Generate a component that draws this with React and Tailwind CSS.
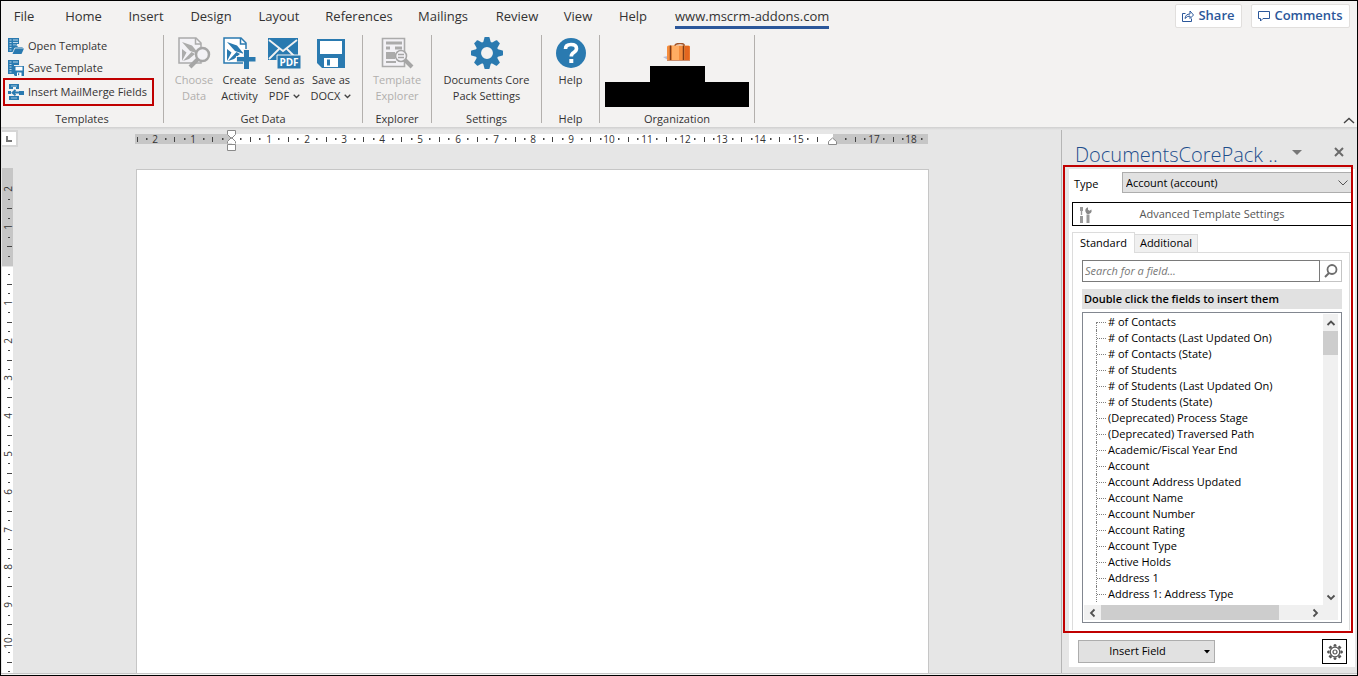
import React from "react";

const BLUE = "#2a7ab0";

function OpenTemplateIcon() {
  return (
    <svg className="shrink-0" width="16" height="16" viewBox="0 0 16 16" aria-hidden="true">
      <path d="M0 0h11v6H9l-1 2H6v6H0z" fill={BLUE} />
      <path d="M1.500 2h2M5 2h5M1.500 4.500h2M5 4.500h5M1.500 7h2M5 7h3M1.500 9.500h2M1.500 12h2" stroke="#cfe3f0" strokeWidth=".9" />
      <path d="M5 7.500h4l1 1.500h4.500V12H7l-2 3z" fill={BLUE} />
      <path d="M7 10.500h9L13.500 16H4.500z" fill={BLUE} />
      <path d="M5 14l1.800-4H14.500" stroke="#f3f2f1" strokeWidth=".8" fill="none" />
    </svg>
  );
}

function SaveTemplateIcon() {
  return (
    <svg className="shrink-0" width="16" height="16" viewBox="0 0 16 16" aria-hidden="true">
      <path d="M0 0h11v5H6v9H0z" fill={BLUE} />
      <path d="M1.500 2h2M5 2h5M1.500 4.500h2M1.500 7h2M1.500 9.500h2M1.500 12h2" stroke="#cfe3f0" strokeWidth=".9" />
      <path d="M6 6h10v10H7l-1-1z" fill={BLUE} />
      <path d="M7.500 6.800h7V10.500h-7zM9 12.500h4.500V16H9z" fill="#fff" />
      <path d="M10 13.300h1.200v2H10z" fill={BLUE} />
    </svg>
  );
}

function MergeFieldsIcon() {
  return (
    <svg className="shrink-0" width="16" height="16" viewBox="0 0 16 16" aria-hidden="true">
      <path d="M1 0h10v5H8V3H5v2H1zM1 12h10v4H1z" fill={BLUE} />
      <path d="M0 7h3v3H0zM11 7h5v4h-5z" fill={BLUE} />
      <path d="M12 8.500H5M7.500 6L4.500 8.700l3 2.500" stroke={BLUE} strokeWidth="1.800" fill="none" />
      <path d="M3 2h6M3 14h6" stroke="#9cc4de" />
    </svg>
  );
}

function PageBase({ color, fill }) {
  return (
    <>
      <path d="M1 1h17l5 5v20H1z" fill={fill} stroke={color} strokeWidth="1.500" />
      <path d="M17.500 1v6H23" fill="none" stroke={color} strokeWidth="1.500" />
      <path d="M4 5l10 3.500 7 8.500-9-3z" fill={color} />
      <path d="M4 12l4.500 3.500L4 24zM5 24l8.500-9 3.500 2-6 5z" fill={color} />
    </>
  );
}

function ChooseDataIcon() {
  return (
    <svg width="33" height="33" viewBox="0 0 33 33" aria-hidden="true">
      <PageBase color="#ababab" fill="#f3f2f6" />
      <path d="M20 22l-8 8" stroke="#a6a6a6" strokeWidth="4" />
      <circle cx="24.500" cy="17.500" r="6.500" fill="#f3f2f6" stroke="#a6a6a6" strokeWidth="2.500" />
    </svg>
  );
}

function CreateActivityIcon() {
  return (
    <svg width="33" height="33" viewBox="0 0 33 33" aria-hidden="true">
      <PageBase color={BLUE} fill="#fff" />
      <path d="M20 12h7v7h6v6h-6v7h-7v-7h-7v-6h7z" fill="#f3f2f1" />
      <path d="M21 13h5v7h6.500v4.500H26V32h-5v-7.500h-7V20h7z" fill={BLUE} />
    </svg>
  );
}

function SendPdfIcon() {
  return (
    <svg width="33" height="33" viewBox="0 0 33 33" aria-hidden="true">
      <path d="M0 1h30v22H0z" fill={BLUE} />
      <path d="M1 3l14 11L29 3M1 22l10-10M29 22L19 12" fill="none" stroke="#f3f2f1" strokeWidth="1.800" />
      <path d="M9 18h24v14H9z" fill={BLUE} stroke="#f3f2f1" />
      <text x="21" y="29" textAnchor="middle" fill="#fff" fontSize="10" fontWeight="700" fontFamily="Open Sans, sans-serif">PDF</text>
    </svg>
  );
}

function SaveIcon() {
  return (
    <svg width="28" height="29" viewBox="0 0 28 29" aria-hidden="true">
      <path d="M0 0h28v29H5l-5-5z" fill={BLUE} />
      <path d="M3 2h22v13H3zM7 19h14v9H7z" fill="#fff" />
      <path d="M10 20.500h3v6h-3z" fill={BLUE} />
    </svg>
  );
}

function ExplorerIcon() {
  return (
    <svg width="33" height="33" viewBox="0 0 33 33" aria-hidden="true">
      <path d="M1.500 1.500h22v28h-22z" fill="#f3f2f6" stroke="#ababab" strokeWidth="1.600" />
      <path d="M5 4.500h16v3H5zM5 9.500h4v3H5zM14 9.500h7v3h-7zM5 15h9v7H5zM5 24h10v2H5z" fill="#ababab" />
      <path d="M23 22l8 8" stroke="#a6a6a6" strokeWidth="4" />
      <circle cx="20" cy="19" r="5.500" fill="#f3f2f6" stroke="#a6a6a6" strokeWidth="1.600" />
      <path d="M17 17.500h6M17 20.500h6" stroke="#a6a6a6" strokeWidth="1.500" />
    </svg>
  );
}

function SettingsIcon() {
  return (
    <svg width="32" height="32" viewBox="-16 -16 32 32" aria-hidden="true">
      <g fill={BLUE}>
        {[0, 45, 90, 135, 180, 225, 270, 315].map((a) => (
          <path key={a} d="M-4-10l1.500-5.500q.2-.5.700-.5h3.600q.5 0 .700.500L4-10z" transform={`rotate(${a})`} />
        ))}
      </g>
      <circle r="8.700" fill="none" stroke={BLUE} strokeWidth="5.500" />
    </svg>
  );
}

function HelpIcon() {
  return (
    <svg width="30" height="30" viewBox="0 0 30 30" aria-hidden="true">
      <circle cx="15" cy="15" r="15" fill={BLUE} />
      <path d="M9.500 11q0-4.500 5.500-4.500t5.500 4q0 2.300-2.700 4-2.500 1.500-2.500 4" fill="none" stroke="#fff" strokeWidth="3.600" />
      <path d="M13.300 21h4v4h-4z" fill="#fff" />
    </svg>
  );
}

function SuitcaseIcon() {
  return (
    <svg width="28" height="19" viewBox="0 0 28 19" aria-hidden="true">
      <path d="M0 14l5-1v4z" fill="#b9bdd6" />
      <path d="M12 3q0-2.500 5-2.500T21 3" fill="none" stroke="#a2562b" strokeWidth="1.500" />
      <rect x="4" y="2.500" width="23" height="15" rx="1.500" fill="#f58d3d" />
      <rect x="9" y="3" width="7" height="14" fill="#ffad63" />
      <rect x="22" y="3" width="4.500" height="14" fill="#e4661f" />
      <path d="M7.500 2.500v15M20.500 2.500v15" stroke="#7d3a17" strokeWidth="1.500" />
      <path d="M4 17.500h23" stroke="#c98d6d" />
    </svg>
  );
}

function Caret() {
  return (
    <svg className="inline-block" width="7" height="5" viewBox="0 0 7 5" aria-hidden="true">
      <path d="M.7.700L3.500 3.500 6.300.700" fill="none" stroke="#444" strokeWidth="1.300" />
    </svg>
  );
}

function Chevron({ dir }) {
  const d = {
    up: "M1.500 7L5 3.500 8.500 7",
    down: "M1.500 3.500L5 7l3.500-3.500",
    left: "M6.500 1.500L3 5l3.500 3.500",
    right: "M3.500 1.500L7 5 3.500 8.500",
  }[dir];
  return (
    <svg width="10" height="10" viewBox="0 0 10 10" aria-hidden="true">
      <path d={d} fill="none" stroke="#505050" strokeWidth="1.800" />
    </svg>
  );
}

const tabs = [
  ["File", "w-[46px]"],
  ["Home", "w-[73px]"],
  ["Insert", "w-[52px]"],
  ["Design", "w-[78px]"],
  ["Layout", "w-[58px]"],
  ["References", "w-[102px]"],
  ["Mailings", "w-[66px]"],
  ["Review", "w-[82px]"],
  ["View", "w-[40px]"],
  ["Help", "w-[70px]"],
];

function Group({ label, width, children }) {
  return (
    <section className={`flex shrink-0 flex-col border-r border-[#b3b0ad] ${width}`} aria-label={label}>
      <div className="flex flex-1 items-start justify-center">{children}</div>
      <h2 className="text-center text-[11px] leading-2">{label}</h2>
    </section>
  );
}

function BigButton({ icon, lines, caret, disabled, width }) {
  return (
    <button
      type="button"
      disabled={disabled}
      className={`flex shrink-0 flex-col items-center pt-px text-[11px] leading-4 whitespace-nowrap disabled:text-[#b1afad] ${width}`}
    >
      <span className="mb-[2px] flex h-[34px] items-center justify-center">{icon}</span>
      {lines.map((l, i) => (
        <span key={l} className="flex items-center gap-1">
          {l}
          {caret && i === lines.length - 1 && <Caret />}
        </span>
      ))}
    </button>
  );
}

function Ribbon() {
  const small = "flex items-center gap-1 whitespace-nowrap px-[5px] text-left text-[11px] leading-4";
  return (
    <header className="shrink-0 bg-[#f3f2f1] text-[#333]">
      <div className="flex h-[33px] items-start">
        <nav className="flex flex-1 items-start pt-[5px] text-[13px] leading-5">
          {tabs.map(([t, w]) => (
            <a key={t} href={`#${t}`} className={`shrink-0 text-center ${w}`}>
              {t}
            </a>
          ))}
          <a href="#addons" aria-current="page" className="ml-[7px] border-b-[3px] border-[#2b579a] font-medium">
            www.mscrm-addons.com
          </a>
        </nav>
        <div className="flex gap-[9px] pt-[3px] pr-[7px] text-[13px] font-semibold text-[#2b579a]">
          <button type="button" className="flex h-6 w-[67px] items-center justify-center gap-1 rounded-xs border border-[#e1dfdd] bg-white">
            <svg width="12" height="12" viewBox="0 0 12 12" fill="none" stroke="#2b579a" aria-hidden="true">
              <path d="M3.500 3.500h-3v8h9v-3M3 8.500Q3.500 4 8 4V1l3.500 4L8 8.500V6Q5 6 3 8.500z" />
            </svg>
            Share
          </button>
          <button type="button" className="flex h-6 w-[99px] items-center justify-center gap-1 rounded-xs border border-[#e1dfdd] bg-white">
            <svg width="12" height="12" viewBox="0 0 12 12" fill="none" stroke="#2b579a" aria-hidden="true">
              <path d="M.5 1.500h11v7H5l-2.500 2.500V8.500h-2z" />
            </svg>
            Comments
          </button>
        </div>
      </div>
      <div className="flex h-[93px] items-start justify-between">
        <div className="flex h-[89px] pt-px">
          <Group label="Templates" width="w-[163px]">
            <div className="flex w-full flex-col px-[2px]">
              <button type="button" className={`h-[22px] ${small}`}>
                <OpenTemplateIcon />
                Open Template
              </button>
              <button type="button" className={`h-[22px] ${small}`}>
                <SaveTemplateIcon />
                Save Template
              </button>
              <button type="button" className="-mt-px flex h-7 w-[151px] items-center gap-1 border-2 border-[#c00000] px-[3px] text-left text-[11px] leading-4 whitespace-nowrap">
                <MergeFieldsIcon />
                Insert MailMerge Fields
              </button>
            </div>
          </Group>
          <Group label="Get Data" width="w-[199px]">
            <BigButton icon={<ChooseDataIcon />} lines={["Choose", "Data"]} disabled width="w-[46px]" />
            <BigButton icon={<CreateActivityIcon />} lines={["Create", "Activity"]} width="w-[45px]" />
            <BigButton icon={<SendPdfIcon />} lines={["Send as", "PDF"]} caret width="w-[45px]" />
            <BigButton icon={<SaveIcon />} lines={["Save as", "DOCX"]} caret width="w-[48px]" />
          </Group>
          <Group label="Explorer" width="w-[69px]">
            <BigButton icon={<ExplorerIcon />} lines={["Template", "Explorer"]} disabled width="w-[60px]" />
          </Group>
          <Group label="Settings" width="w-[110px]">
            <BigButton icon={<SettingsIcon />} lines={["Documents Core", "Pack Settings"]} width="w-[100px]" />
          </Group>
          <Group label="Help" width="w-[58px]">
            <BigButton icon={<HelpIcon />} lines={["Help"]} width="w-[50px]" />
          </Group>
          <Group label="Organization" width="w-[155px]">
            <div className="flex flex-col items-center pt-2">
              <SuitcaseIcon />
              <div className="mt-1 h-4 w-[55px] bg-black" />
              <div className="h-[25px] w-36 bg-black" />
            </div>
          </Group>
        </div>
        <button type="button" aria-label="Collapse the ribbon" className="mr-[2px] self-end pb-[3px]">
          <svg width="12" height="7" viewBox="0 0 12 7" aria-hidden="true">
            <path d="M1 6l5-4.500L11 6" fill="none" stroke="#444" strokeWidth="1.400" />
          </svg>
        </button>
      </div>
    </header>
  );
}

const CM = 37.8;

function HorizontalRuler() {
  const origin = 96;
  const marks = [];
  for (let q = -10; q <= 73; q++) {
    const x = Math.round(origin + (q * CM) / 4);
    if (q === 0 || q === 64 || q === 63) continue;
    if (q % 4 === 0)
      marks.push(
        <text key={q} x={x} y="13" textAnchor="middle" fontSize="10" fill="#333">
          {Math.abs(q / 4)}
        </text>
      );
    else if (q % 2 === 0) marks.push(<path key={q} d={`M${x + 0.5} 7v5`} stroke="#444" />);
    else marks.push(<path key={q} d={`M${x} 9h1.500`} stroke="#444" strokeWidth="2" />);
  }
  return (
    <svg className="block font-['Open_Sans',sans-serif]" width="793" height="24" viewBox="0 0 793 24" aria-hidden="true">
      <path d="M0 4h793v10H0z" fill="#c6c6c6" />
      <path d="M97 4h601v10H97z" fill="#fff" />
      {marks}
      <g fill="#fff" stroke="#8a8a8a">
        <path d="M92.500.500h8v4l-4 4-4-4zM92.500 13.500v-2l4-4 4 4v2M92.500 14.500h8v6h-8z" />
        <path d="M693.500 14.500v-3l4-3.500 4 3.500v3z" />
      </g>
    </svg>
  );
}

function VerticalRuler() {
  const origin = 97;
  const marks = [];
  for (let q = -9; q <= 43; q++) {
    const y = Math.round(origin + (q * CM) / 4);
    if (q === 0 || y < 16) continue;
    if (q % 4 === 0)
      marks.push(
        <text key={q} transform={`translate(10 ${y}) rotate(-90)`} textAnchor="middle" fontSize="10" fill="#333">
          {Math.abs(q / 4)}
        </text>
      );
    else if (q % 2 === 0) marks.push(<path key={q} d={`M5 ${y + 0.5}h5`} stroke="#444" />);
    else marks.push(<path key={q} d={`M6 ${y + 0.5}h2`} stroke="#444" />);
  }
  return (
    <svg className="block font-['Open_Sans',sans-serif]" width="12" height="506" viewBox="0 0 12 506" aria-hidden="true">
      <path d="M0 0h11v98H0z" fill="#c6c6c6" />
      <path d="M0 99h11v407H0z" fill="#fff" />
      {marks}
    </svg>
  );
}

const fields = [
  "# of Contacts",
  "# of Contacts (Last Updated On)",
  "# of Contacts (State)",
  "# of Students",
  "# of Students (Last Updated On)",
  "# of Students (State)",
  "(Deprecated) Process Stage",
  "(Deprecated) Traversed Path",
  "Academic/Fiscal Year End",
  "Account",
  "Account Address Updated",
  "Account Name",
  "Account Number",
  "Account Rating",
  "Account Type",
  "Active Holds",
  "Address 1",
  "Address 1: Address Type",
];

function FieldList() {
  return (
    <div className="flex flex-1 flex-col overflow-hidden border border-[#828790] bg-white p-px">
      <div className="flex min-h-0 flex-1">
        <ul role="tree" aria-label="Fields" className="flex-1 overflow-hidden pl-3">
          {fields.map((f, i) => (
            <li key={f} role="treeitem" className="flex h-4 text-[11px] leading-4 whitespace-nowrap">
              <span className={`w-0 shrink-0 border-l border-dotted border-[#808080] ${i === 0 ? "mt-2" : ""}`} />
              <span className="mt-2 h-0 w-[9px] shrink-0 border-t border-dotted border-[#808080]" />
              <span className="pl-[2px]">{f}</span>
            </li>
          ))}
        </ul>
        <div className="mr-[2px] flex w-[15px] flex-col items-center bg-[#f0f0f0]">
          <button type="button" aria-label="Scroll up" className="flex h-[17px] items-center">
            <Chevron dir="up" />
          </button>
          <div className="h-6 w-full bg-[#cdcdcd]" />
          <button type="button" aria-label="Scroll down" className="mt-auto flex h-[17px] items-center">
            <Chevron dir="down" />
          </button>
        </div>
      </div>
      <div className="mr-[2px] mb-px flex h-[15px] shrink-0 items-center bg-[#f0f0f0] pr-[15px]">
        <button type="button" aria-label="Scroll left" className="flex w-[17px] justify-center">
          <Chevron dir="left" />
        </button>
        <div className="h-full w-[178px] bg-[#cdcdcd]" />
        <button type="button" aria-label="Scroll right" className="ml-auto flex w-[17px] justify-center">
          <Chevron dir="right" />
        </button>
      </div>
    </div>
  );
}

function SmallGear() {
  return (
    <svg width="16" height="16" viewBox="-8 -8 16 16" fill="none" stroke="#555" aria-hidden="true">
      {[0, 45, 90, 135, 180, 225, 270, 315].map((a) => (
        <path key={a} d="M-1-5.500v-1.700h2v1.700" transform={`rotate(${a})`} fill="#555" />
      ))}
      <circle r="4.800" strokeWidth="1.300" />
      <circle r="2" strokeWidth="1.200" />
    </svg>
  );
}

function TaskPane() {
  return (
    <aside className="flex w-[296px] shrink-0 flex-col border-l border-[#b5b5b5] pr-[2px] pl-[7px] text-[11px] text-black">
      <div className="flex h-[38px] shrink-0 items-end pb-1 pl-[6px]">
        <h1 className="w-[212px] text-[20px] leading-[18px] font-light whitespace-nowrap text-[#1e4e8c]">DocumentsCorePack ..</h1>
        <button type="button" aria-label="Task pane options" className="flex h-6 w-5 items-center justify-center">
          <svg width="10" height="5" viewBox="0 0 10 5" aria-hidden="true">
            <path d="M0 0h10L5 5z" fill="#777" />
          </svg>
        </button>
        <button type="button" aria-label="Close" className="ml-auto flex h-6 w-8 items-center justify-center">
          <svg width="10" height="10" viewBox="0 0 10 10" aria-hidden="true">
            <path d="M1 1l8 8M9 1L1 9" stroke="#6a6a6a" strokeWidth="2" />
          </svg>
        </button>
      </div>
      <div className="mt-px flex min-h-0 flex-1 flex-col bg-white">
        <div className="relative flex min-h-0 flex-1 flex-col px-[3px] pt-[3px]">
          <div className="pointer-events-none absolute -top-1 right-[2px] bottom-0 -left-[6px] z-10 border-2 border-[#c00000]" />
          <div className="flex h-[21px] items-center">
            <label htmlFor="type" className="w-[50px] pt-1 pl-[2px]">
              Type
            </label>
            <div className="relative h-full flex-1">
              <select id="type" className="block h-full w-full appearance-none border border-[#adadad] bg-[#e1e1e1] px-[3px] leading-4">
                <option>Account (account)</option>
              </select>
              <svg className="pointer-events-none absolute top-2 right-1" width="10" height="6" viewBox="0 0 10 6" aria-hidden="true">
                <path d="M.5.500L5 5 9.500.500" fill="none" stroke="#555" />
              </svg>
            </div>
          </div>
          <button type="button" className="mt-[9px] flex h-6 shrink-0 items-center border border-black bg-white pl-[6px] text-[#555]">
            <svg width="14" height="17" viewBox="0 0 14 17" aria-hidden="true">
              <path d="M1 1h3v4H3.200v4H1.800V5H1zM1 10h3v7H1zM7.500 8.500h3V17h-3z" fill="#999" />
              <path d="M9 1.300v2.500l1.500 1L12.300 3.500Q13.500 6.500 10.500 7.800T6.500 5.800 9 1.300z" fill="#888" />
            </svg>
            <span className="flex-1 pr-5 text-center">Advanced Template Settings</span>
          </button>
          <div role="tablist" className="mt-[6px] flex shrink-0 items-end">
            <button type="button" role="tab" aria-selected="true" className="relative -mb-px h-[21px] w-[63px] border border-b-0 border-[#dcdcdc] bg-white">
              Standard
            </button>
            <button type="button" role="tab" aria-selected="false" className="h-[18px] w-[63px] border border-b-0 border-l-0 border-[#dcdcdc] bg-[#f0f0f0]">
              Additional
            </button>
          </div>
          <div role="tabpanel" className="mr-[2px] mb-[3px] flex min-h-0 flex-1 flex-col border border-b-0 border-[#dcdcdc] pt-[7px] pr-[7px] pb-[7px] pl-[9px]">
            <div className="flex h-[22px] shrink-0">
              <input
                type="text"
                aria-label="Search for a field"
                placeholder="Search for a field..."
                className="min-w-0 flex-1 border border-[#7a7a7a] px-[2px] italic placeholder:text-[#777]"
              />
              <button type="button" aria-label="Search" className="flex w-[22px] items-center justify-center border border-l-0 border-[#c4c4c4]">
                <svg width="14" height="14" viewBox="0 0 14 14" fill="none" stroke="#6d6d6d" aria-hidden="true">
                  <circle cx="8" cy="5.500" r="4.500" strokeWidth="1.800" />
                  <path d="M5 9l-4 4" strokeWidth="2" />
                </svg>
              </button>
            </div>
            <p className="mt-[7px] mb-[3px] h-5 shrink-0 bg-[#e1e1e1] pl-[2px] leading-5 font-semibold">Double click the fields to insert them</p>
            <FieldList />
          </div>
        </div>
        <div className="flex h-[34px] shrink-0 items-center justify-between pt-[3px] pr-2 pl-[9px]">
          <button type="button" className="flex h-[23px] w-[137px] items-center border border-[#adadad] bg-[#e1e1e1] pr-1">
            <span className="flex-1 pr-2 text-center">Insert Field</span>
            <svg width="6" height="4" viewBox="0 0 6 4" aria-hidden="true">
              <path d="M0 0h6L3 3.500z" />
            </svg>
          </button>
          <button type="button" aria-label="Settings" className="flex h-[25px] w-[25px] items-center justify-center border border-black bg-white">
            <SmallGear />
          </button>
        </div>
      </div>
      <div className="h-[6px] shrink-0" />
    </aside>
  );
}

export default function App() {
  return (
    <div className="flex h-screen flex-col overflow-hidden border border-black bg-[#e6e6e6] font-['Open_Sans','Noto_Sans',sans-serif]">
      <Ribbon />
      <div className="h-[3px] shrink-0 bg-linear-to-b from-[#cfcfcf] to-[#e6e6e6]" />
      <main className="flex min-h-0 flex-1">
        <div className="flex w-[134px] shrink-0 flex-col items-start pl-px">
          <button type="button" aria-label="Tab stop" className="flex h-[17px] w-4 shrink-0 items-center justify-center border-2 border-l-0 border-[#d6d6d6] bg-white">
            <svg width="6" height="6" viewBox="0 0 6 6" aria-hidden="true">
              <path d="M1 0v5h5" fill="none" stroke="#777" strokeWidth="2" />
            </svg>
          </button>
          <div className="mt-[21px] min-h-0 flex-1 overflow-hidden">
            <VerticalRuler />
          </div>
        </div>
        <div className="flex min-w-0 flex-1 flex-col items-start overflow-hidden">
          <HorizontalRuler />
          <div className="mt-[15px] ml-px w-[793px] flex-1 border border-b-0 border-[#c6c6c6] bg-white" contentEditable suppressContentEditableWarning aria-label="Document" />
        </div>
        <TaskPane />
      </main>
      <footer className="h-[2px] shrink-0 border-t border-[#c6c6c6] bg-[#f3f2f1]" />
    </div>
  );
}
